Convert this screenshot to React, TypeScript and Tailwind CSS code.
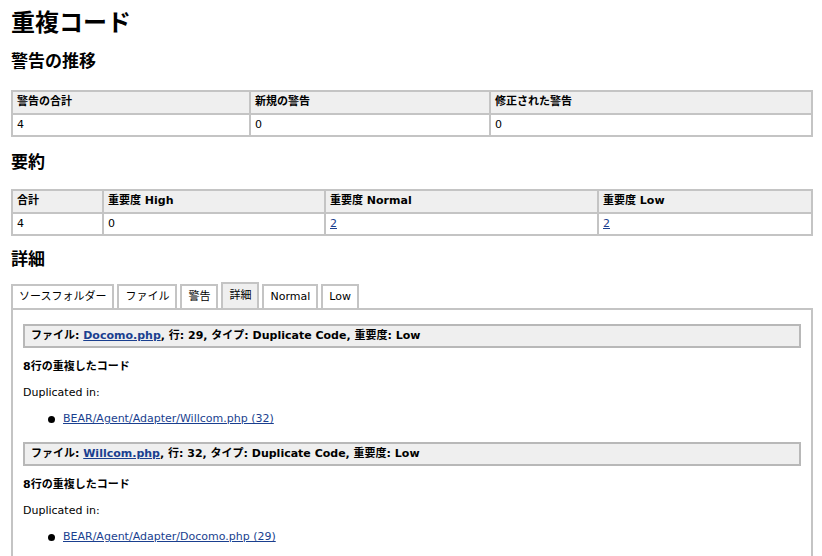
const font = { fontFamily: '"DejaVu Sans", Verdana, "Noto Sans CJK JP", sans-serif' };

const tabs = ["ソースフォルダー", "ファイル", "警告", "詳細", "Normal", "Low"];

function Issue({ file, line, other }: { file: string; line: number; other: string }) {
  return (
    <div>
      <div className="border-2 border-[#b8b8b8] bg-[#efefef] px-[6px] h-[24px] flex items-center font-bold">
        ファイル:&nbsp;<a className="text-[#1a3f8f] underline">{file}</a>, 行: {line}, タイプ: Duplicate Code, 重要度: Low
      </div>
      <div className="font-bold mt-[12px] h-[14px] leading-[14px]">8行の重複したコード</div>
      <div className="mt-[12px] h-[14px] leading-[14px]">Duplicated in:</div>
      <ul className="mt-[12px] h-[14px] leading-[14px] pl-[25px] flex items-center">
        <li className="flex items-center">
          <span className="w-[7px] h-[7px] rounded-full bg-black mr-[8px]" />
          <a className="text-[#1a3f8f] underline">{other}</a>
        </li>
      </ul>
    </div>
  );
}

export default function App() {
  return (
    <div className="min-h-screen bg-white text-black text-[11px] pl-[11px] pr-[9px] pt-[8px]" style={font}>
      <h1 className="text-[24px] font-bold leading-[30px]">重複コード</h1>
      <h2 className="text-[17px] font-bold leading-[22px] mt-[12px]">警告の推移</h2>

      <table className="w-full border-collapse mt-[18px]">
        <thead>
          <tr className="bg-[#efefef] h-[23px]">
            <th className="text-left font-bold border-2 border-[#c4c4c4] px-[4px] w-[238px]">警告の合計</th>
            <th className="text-left font-bold border-2 border-[#c4c4c4] px-[4px] w-[240px]">新規の警告</th>
            <th className="text-left font-bold border-2 border-[#c4c4c4] px-[4px]">修正された警告</th>
          </tr>
        </thead>
        <tbody>
          <tr className="h-[22px]">
            <td className="border-2 border-[#c4c4c4] px-[4px]">4</td>
            <td className="border-2 border-[#c4c4c4] px-[4px]">0</td>
            <td className="border-2 border-[#c4c4c4] px-[4px]">0</td>
          </tr>
        </tbody>
      </table>

      <h2 className="text-[17px] font-bold leading-[22px] mt-[14px]">要約</h2>

      <table className="w-full border-collapse mt-[16px]">
        <thead>
          <tr className="bg-[#efefef] h-[23px]">
            <th className="text-left font-bold border-2 border-[#c4c4c4] px-[4px] w-[91px]">合計</th>
            <th className="text-left font-bold border-2 border-[#c4c4c4] px-[4px] w-[222px]">重要度 High</th>
            <th className="text-left font-bold border-2 border-[#c4c4c4] px-[4px] w-[273px]">重要度 Normal</th>
            <th className="text-left font-bold border-2 border-[#c4c4c4] px-[4px]">重要度 Low</th>
          </tr>
        </thead>
        <tbody>
          <tr className="h-[22px]">
            <td className="border-2 border-[#c4c4c4] px-[4px]">4</td>
            <td className="border-2 border-[#c4c4c4] px-[4px]">0</td>
            <td className="border-2 border-[#c4c4c4] px-[4px]"><a className="text-[#1a3f8f] underline">2</a></td>
            <td className="border-2 border-[#c4c4c4] px-[4px]"><a className="text-[#1a3f8f] underline">2</a></td>
          </tr>
        </tbody>
      </table>

      <h2 className="text-[17px] font-bold leading-[22px] mt-[12px]">詳細</h2>

      <div className="mt-[12px] flex items-end gap-[3px] h-[26px]">
        {tabs.map((t) => {
          const active = t === "詳細";
          return (
            <div
              key={t}
              className={`border-2 border-b-0 border-[#c4c4c4] px-[6px] flex items-center ${
                active ? "h-[26px] bg-[#efefef]" : "h-[24px] bg-white"
              }`}
            >
              {t}
            </div>
          );
        })}
      </div>

      <div className="border-2 border-[#c4c4c4] px-[10px] pt-[14px] pb-[20px] flex flex-col gap-[16px]">
        <Issue file="Docomo.php" line={29} other="BEAR/Agent/Adapter/Willcom.php (32)" />
        <Issue file="Willcom.php" line={32} other="BEAR/Agent/Adapter/Docomo.php (29)" />
      </div>
    </div>
  );
}
